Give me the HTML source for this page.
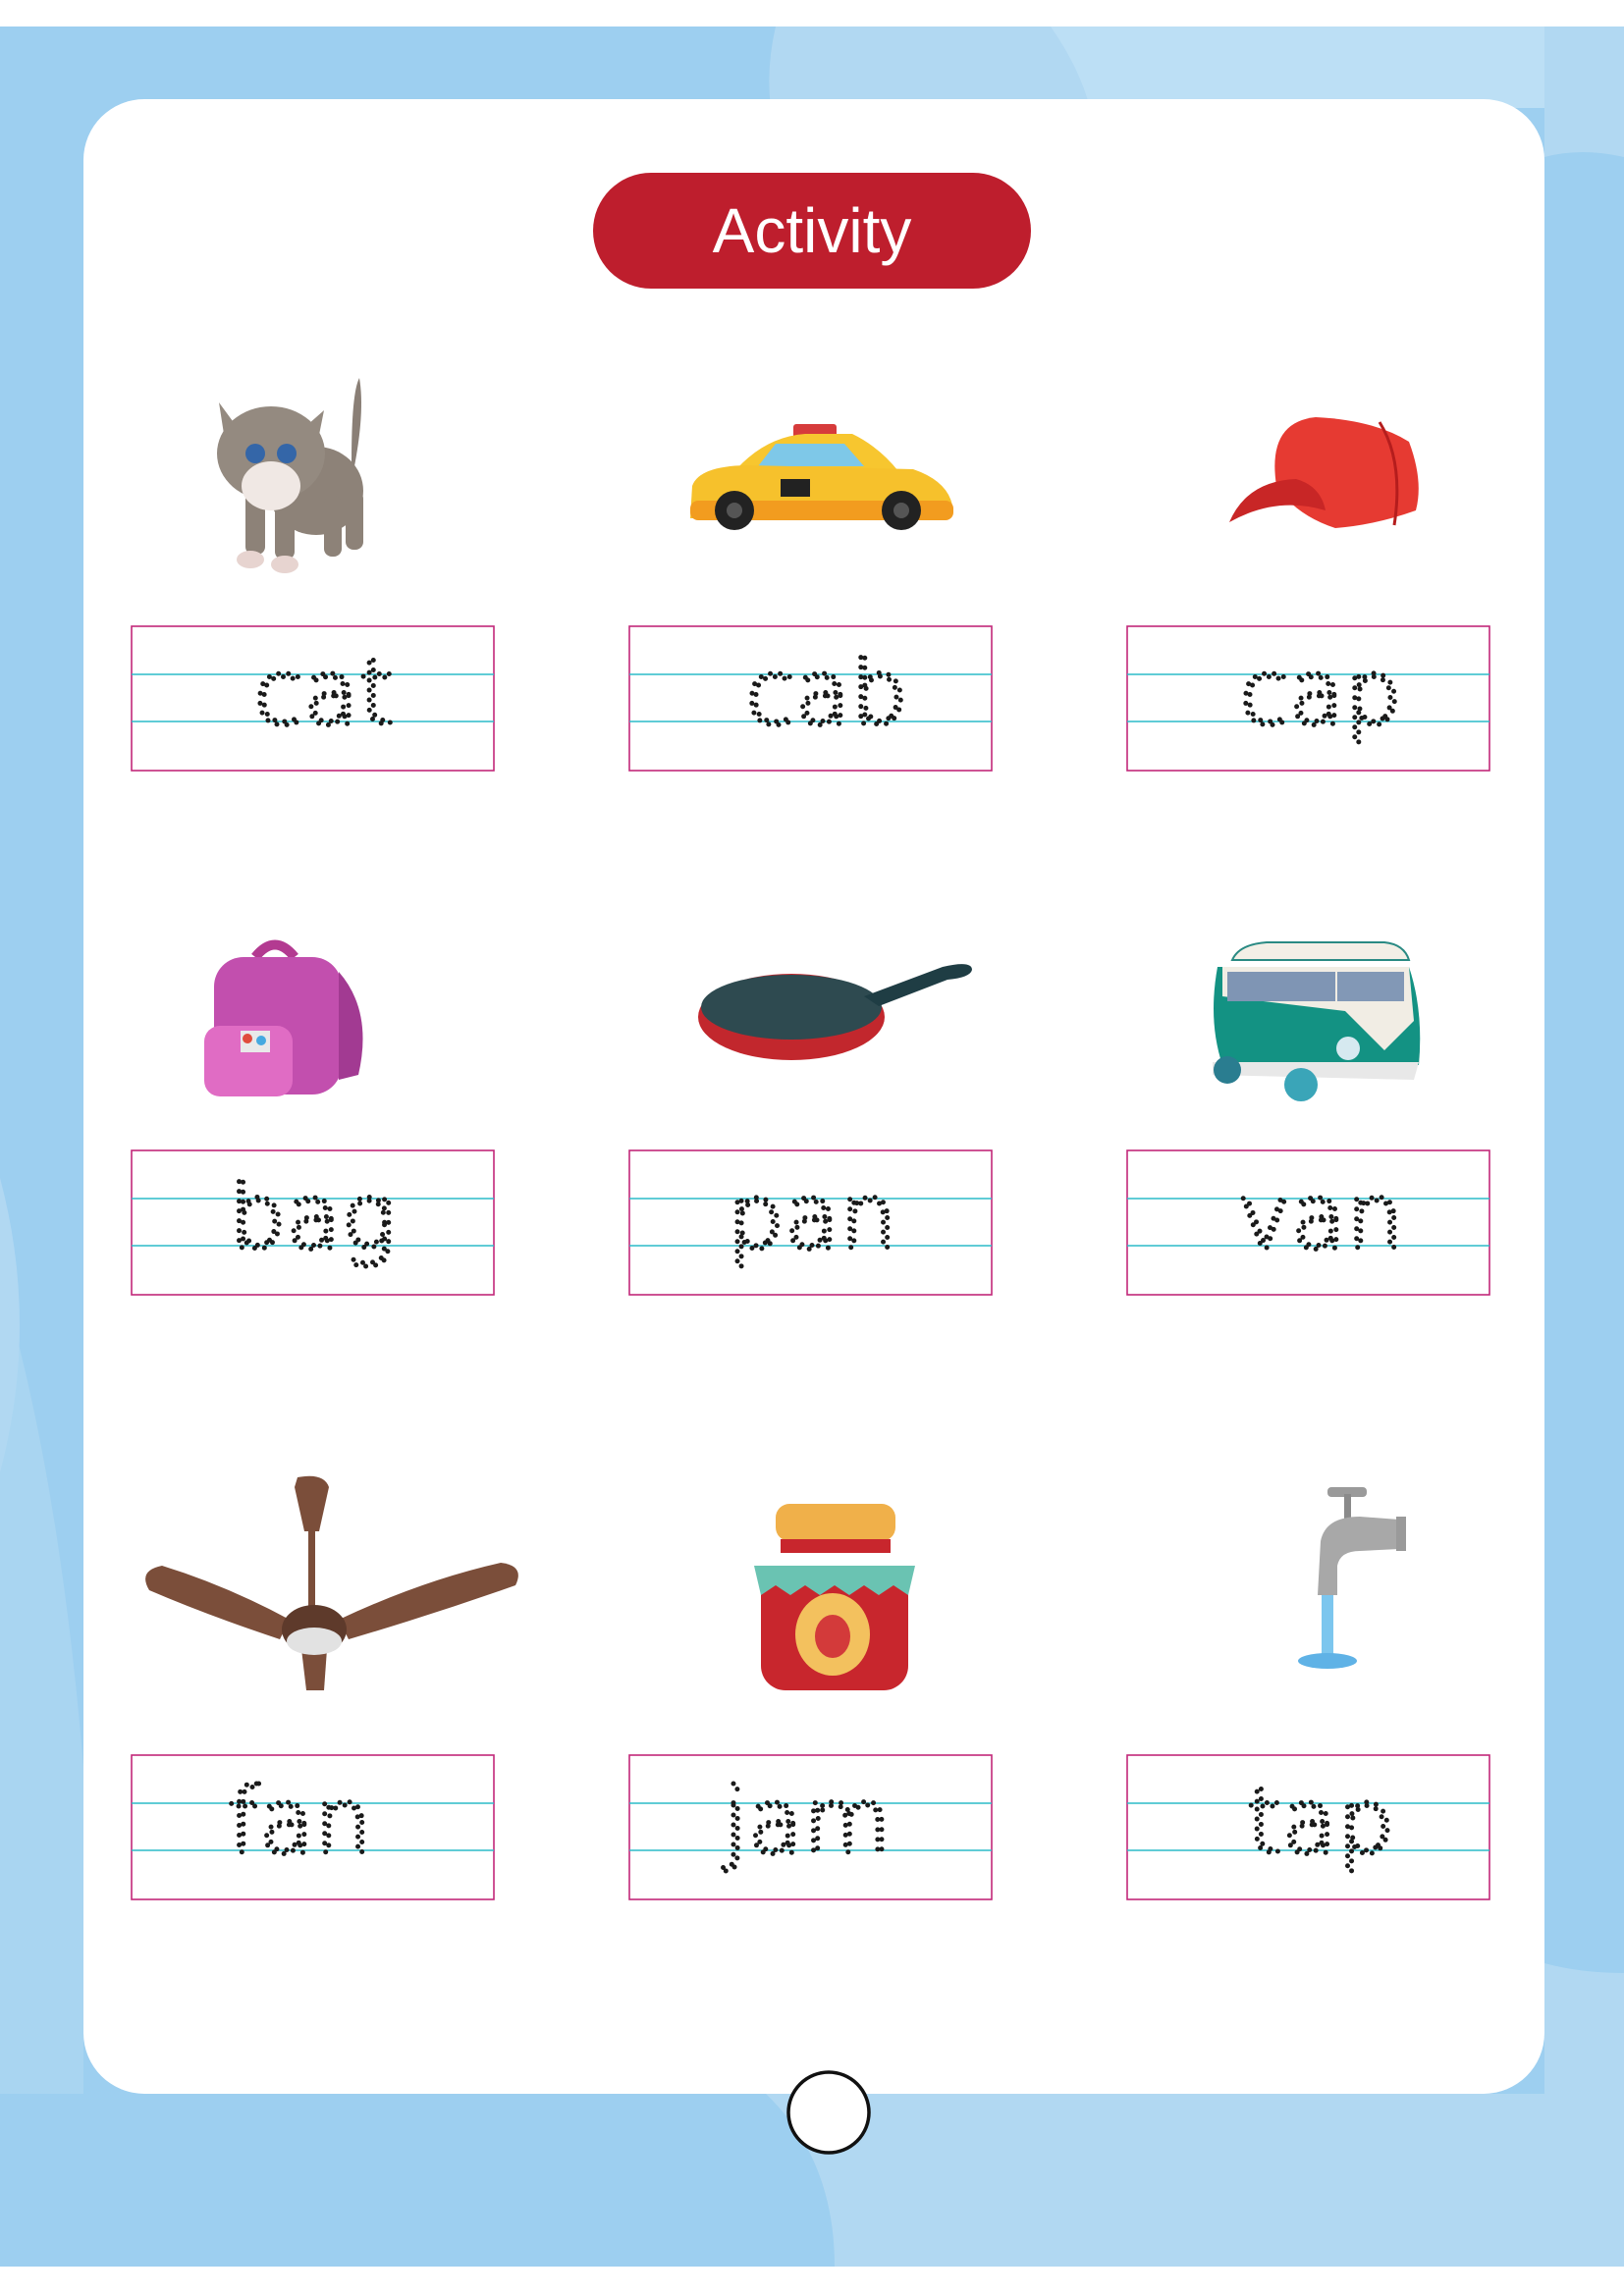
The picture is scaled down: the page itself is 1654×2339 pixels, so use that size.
<!DOCTYPE html>
<html><head><meta charset="utf-8"><style>
html,body{margin:0;padding:0;background:#fff}
svg{display:block}
.w{font-family:"DejaVu Sans","Liberation Sans",sans-serif;font-weight:200;font-size:92px;letter-spacing:0px;fill:none;stroke:#1a1a1a;stroke-width:5;stroke-dasharray:0 10;stroke-linecap:round;text-anchor:middle}
</style></head><body>
<svg width="1654" height="2339" viewBox="0 0 1654 2339" xmlns="http://www.w3.org/2000/svg">
<rect x="0" y="0" width="1654" height="2339" fill="#fff"/>
<rect x="0" y="27" width="1654" height="2282" fill="#9dcff0"/>
<path d="M790 27 Q780 70 785 110 L1654 110 L1654 27 Z" fill="#b1d8f2"/>
<path d="M1070 27 Q1100 70 1110 110 L1654 110 L1654 27 Z" fill="#bcdff5"/>
<path d="M1573 160 Q1610 150 1654 160 L1654 27 L1573 27 Z" fill="#b1d8f2"/>
<path d="M0 1200 Q40 1350 0 1500 Z" fill="#b1d8f2"/>
<path d="M0 1300 Q60 1500 85 1800 L85 2133 L0 2133 Z" fill="#b1d8f2" opacity="0.6"/>
<path d="M780 2133 Q850 2200 850 2309 L1654 2309 L1654 2010 Q1610 2010 1573 2000 L1573 2133 Z" fill="#b1d8f2"/>
<rect x="85" y="101" width="1488" height="2032" rx="62" fill="#fff"/>
<rect x="604" y="176" width="446" height="118" rx="59" fill="#be1e2d"/>
<text x="827" y="257" font-family="Liberation Sans,sans-serif" font-size="64" fill="#fff" text-anchor="middle">Activity</text>

<g fill="none" stroke-width="1.6">
<g id="b1"><rect x="134" y="638" width="369" height="147" stroke="#c2287a"/><line x1="134" y1="687" x2="503" y2="687" stroke="#2bbcc9"/><line x1="134" y1="735" x2="503" y2="735" stroke="#2bbcc9"/></g>
<use href="#b1" x="507"/><use href="#b1" x="1014"/>
<use href="#b1" y="534"/><use href="#b1" x="507" y="534"/><use href="#b1" x="1014" y="534"/>
<use href="#b1" y="1150"/><use href="#b1" x="507" y="1150"/><use href="#b1" x="1014" y="1150"/>
</g>
<text class="w" x="330" y="737">cat</text>
<text class="w" x="842" y="737">cab</text>
<text class="w" x="1345" y="737">cap</text>
<text class="w" x="318" y="1271">bag</text>
<text class="w" x="827" y="1271">pan</text>
<text class="w" x="1345" y="1271">van</text>
<text class="w" x="305" y="1887">fan</text>
<text class="w" x="822" y="1887">jam</text>
<text class="w" x="1345" y="1887">tap</text>

<!-- cat -->
<g>
<path d="M360 480 Q372 420 366 385 Q358 400 358 470 Z" fill="#8a7f76"/>
<ellipse cx="322" cy="500" rx="48" ry="45" fill="#8d8278"/>
<rect x="250" y="500" width="20" height="65" rx="8" fill="#8d8278"/>
<rect x="280" y="505" width="20" height="65" rx="8" fill="#8d8278"/>
<rect x="330" y="505" width="18" height="62" rx="8" fill="#8d8278"/>
<rect x="352" y="500" width="18" height="60" rx="8" fill="#8d8278"/>
<ellipse cx="276" cy="462" rx="55" ry="48" fill="#948a80"/>
<path d="M223 410 L245 440 L230 455 Z M330 418 L305 440 L322 458 Z" fill="#948a80"/>
<ellipse cx="276" cy="495" rx="30" ry="25" fill="#f0e8e4"/>
<circle cx="260" cy="462" r="10" fill="#3466a8"/><circle cx="292" cy="462" r="10" fill="#3466a8"/>
<ellipse cx="255" cy="570" rx="14" ry="9" fill="#e7d4d0"/><ellipse cx="290" cy="575" rx="14" ry="9" fill="#e7d4d0"/>
</g>
<!-- taxi -->
<g>
<rect x="808" y="432" width="44" height="18" rx="3" fill="#d63b3b"/>
<path d="M750 478 Q780 445 820 442 L868 442 Q895 455 915 480 Z" fill="#f7c62f"/>
<path d="M772 475 L790 452 L860 452 L880 475 Z" fill="#7ec8e8"/>
<path d="M705 495 Q712 475 760 474 L930 478 Q965 490 970 515 L968 528 L703 528 Z" fill="#f6c12c"/>
<rect x="703" y="510" width="268" height="20" rx="8" fill="#f29c1f"/>
<circle cx="748" cy="520" r="20" fill="#222"/><circle cx="918" cy="520" r="20" fill="#222"/>
<circle cx="748" cy="520" r="8" fill="#555"/><circle cx="918" cy="520" r="8" fill="#555"/>
<rect x="795" y="488" width="30" height="18" fill="#222"/>
</g>
<!-- cap -->
<g>
<path d="M1300 495 Q1290 430 1340 425 Q1400 428 1435 450 Q1450 490 1442 520 Q1400 535 1360 538 Q1320 525 1300 495 Z" fill="#e63a32"/>
<path d="M1252 532 Q1270 490 1320 488 Q1345 495 1350 520 Q1300 505 1252 532 Z" fill="#c82626"/>
<path d="M1405 430 Q1430 470 1420 535" stroke="#b51d1d" stroke-width="3" fill="none"/>
</g>
<!-- bag -->
<g>
<path d="M260 975 Q280 950 300 975" stroke="#b33a91" stroke-width="10" fill="none"/>
<rect x="218" y="975" width="130" height="140" rx="30" fill="#c24fae"/>
<path d="M345 990 Q380 1030 365 1095 L345 1100 Z" fill="#a23a92"/>
<rect x="208" y="1045" width="90" height="72" rx="16" fill="#e06cc4"/>
<rect x="245" y="1050" width="30" height="22" fill="#e9e9e9"/>
<circle cx="252" cy="1058" r="5" fill="#e04c3c"/><circle cx="266" cy="1060" r="5" fill="#45a9e0"/>
</g>
<!-- pan -->
<g>
<ellipse cx="806" cy="1036" rx="95" ry="44" fill="#c2272d"/>
<ellipse cx="806" cy="1026" rx="92" ry="33" fill="#2e4a50"/>
<path d="M880 1015 L960 985 Q990 978 990 988 Q988 996 965 998 L895 1025 Z" fill="#1f3d44"/>
</g>
<!-- van -->
<g>
<path d="M1255 978 Q1262 962 1290 960 L1410 960 Q1430 962 1435 978 Z" fill="#f3efe6" stroke="#2a8a83" stroke-width="2"/>
<path d="M1240 985 L1435 985 Q1450 1030 1445 1085 L1245 1085 Q1230 1040 1240 985 Z" fill="#139283"/>
<path d="M1245 985 L1435 985 L1440 1040 L1410 1070 L1370 1030 L1245 1015 Z" fill="#f1ede4"/>
<rect x="1250" y="990" width="110" height="30" fill="#7f95b4"/>
<rect x="1362" y="990" width="68" height="30" fill="#8298b6"/>
<path d="M1235 1082 L1445 1082 L1440 1100 L1235 1095 Z" fill="#e8e8e8"/>
<circle cx="1250" cy="1090" r="14" fill="#2a7d90"/><circle cx="1325" cy="1105" r="17" fill="#3aa5b8"/>
<circle cx="1373" cy="1068" r="12" fill="#d6e9f0"/>
</g>
<!-- fan -->
<g fill="#7b4e3a">
<path d="M303 1505 Q330 1500 335 1515 L325 1560 L310 1560 L300 1515 Z"/>
<rect x="314" y="1560" width="7" height="80"/>
<path d="M152 1620 Q140 1600 165 1595 Q230 1615 295 1650 L285 1670 Q210 1645 152 1620 Z"/>
<path d="M525 1615 Q535 1595 510 1592 Q430 1610 345 1650 L355 1670 Q440 1645 525 1615 Z"/>
<path d="M307 1680 L333 1680 L330 1722 L312 1722 Z"/>
<ellipse cx="320" cy="1660" rx="33" ry="25" fill="#5e3a2b"/>
<ellipse cx="320" cy="1672" rx="28" ry="14" fill="#e2e2e2"/>
</g>
<!-- jam -->
<g>
<rect x="775" y="1600" width="150" height="122" rx="25" fill="#c8262d"/>
<path d="M768 1595 L932 1595 L925 1625 L910 1615 L895 1625 L880 1615 L865 1625 L850 1615 L835 1625 L820 1615 L805 1625 L790 1615 L775 1625 Z" fill="#6ac3b2"/>
<rect x="790" y="1532" width="122" height="38" rx="14" fill="#f0b04a"/>
<rect x="795" y="1568" width="112" height="14" fill="#c8262d"/>
<ellipse cx="848" cy="1665" rx="38" ry="42" fill="#f3c15e"/>
<ellipse cx="848" cy="1667" rx="18" ry="22" fill="#d33a3a"/>
</g>
<!-- tap -->
<g>
<rect x="1352" y="1515" width="40" height="10" rx="4" fill="#9a9a9a"/>
<rect x="1369" y="1522" width="7" height="25" fill="#8a8a8a"/>
<path d="M1345 1570 Q1350 1545 1385 1545 L1425 1548 L1425 1578 L1385 1580 Q1365 1580 1362 1595 L1362 1625 L1342 1625 Z" fill="#a8a8a8"/>
<rect x="1422" y="1545" width="10" height="35" fill="#9a9a9a"/>
<rect x="1346" y="1625" width="12" height="60" fill="#7cc6ee"/>
<ellipse cx="1352" cy="1692" rx="30" ry="8" fill="#5fb2e6"/>
</g>

<circle cx="844" cy="2152" r="41" fill="#fff" stroke="#111" stroke-width="3.5"/>
</svg>
</body></html>
